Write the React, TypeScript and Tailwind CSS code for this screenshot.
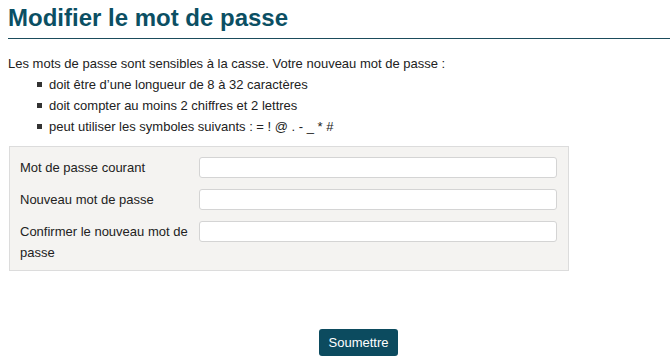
export default function App() {
  const rules = [
    "doit être d’une longueur de 8 à 32 caractères",
    "doit compter au moins 2 chiffres et 2 lettres",
    "peut utiliser les symboles suivants : = ! @ . - _ * #",
  ];
  const fields = [
    "Mot de passe courant",
    "Nouveau mot de passe",
    "Confirmer le nouveau mot de passe",
  ];

  return (
    <div className="min-h-[360px] bg-white pl-2 text-[13px] text-[#222] font-['Liberation_Sans',Arial,sans-serif]">
      <h1 className="pt-[5px] pb-[7px] border-b border-[#1b4c5c] text-[24px] leading-[26px] font-bold text-[#0b4f63]">
        Modifier le mot de passe
      </h1>

      <p className="mt-[17px] leading-[16px]">
        Les mots de passe sont sensibles à la casse. Votre nouveau mot de passe :
      </p>
      <ul className="mt-[2px] pl-[29px]">
        {rules.map((r) => (
          <li key={r} className="flex items-center h-[21px]">
            <span className="w-[5px] h-[5px] bg-[#333] mr-[7px] shrink-0" />
            {r}
          </li>
        ))}
      </ul>

      <form className="mt-[9px] ml-px w-[560px] bg-[#f4f3f1] border border-[#dcdcdc] pl-[10px] pr-[10px] pt-[10px] pb-[7px]">
        {fields.map((f) => (
          <div key={f} className="flex items-start mb-[11px] last:mb-0">
            <label className="w-[179px] pr-[8px] leading-[21px]">{f}</label>
            <input
              type="password"
              className="w-[358px] h-[21px] bg-white border border-[#d4d4d4] rounded-[3px]"
            />
          </div>
        ))}
      </form>

      <div className="mt-[58px] flex justify-center pl-[39px]">
        <button className="h-[27px] px-[10px] bg-[#0c4b5f] text-white rounded-[3px] text-[13px]">
          Soumettre
        </button>
      </div>
    </div>
  );
}
